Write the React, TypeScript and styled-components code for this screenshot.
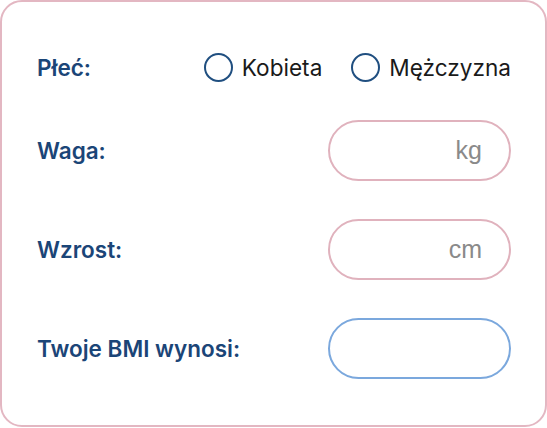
import React from "react";
import styled, { createGlobalStyle } from "styled-components";

const Global = createGlobalStyle`
  html, body { margin: 0; padding: 0; background: #ffffff; }
  body { font-family: Inter, "Noto Sans", sans-serif; }
  * { box-sizing: border-box; }
`;

const Card = styled.div`
  width: 547px;
  height: 427px;
  border: 2px solid #e3b7c2;
  border-radius: 22px;
  background: #fff;
  padding: 34px 34px 0 35px;
  display: flex;
  flex-direction: column;
`;

const GenderRow = styled.div`
  height: 62px;
  display: flex;
  align-items: center;
  justify-content: space-between;
  margin-bottom: 22px;
`;

const Fields = styled.div`
  display: flex;
  flex-direction: column;
  gap: 38px;
`;

const Row = styled.div`
  height: 61px;
  display: flex;
  align-items: center;
  justify-content: space-between;
`;

const Label = styled.span`
  font-size: 22.5px;
  font-weight: 600;
  color: #1b4577;
`;

const Options = styled.div`
  display: flex;
  align-items: center;
  gap: 29px;
`;

const Option = styled.label`
  display: flex;
  align-items: center;
  gap: 9px;
  font-size: 22.6px;
  color: #1a1a1a;
`;

const Circle = styled.span`
  width: 29px;
  height: 29px;
  border-radius: 50%;
  border: 2px solid #204f80;
`;

const Input = styled.div<{ $active?: boolean }>`
  width: 183px;
  height: 61px;
  border-radius: 31px;
  border: 2px solid ${(p) => (p.$active ? "#7ba8dd" : "#e0b2bd")};
  display: flex;
  align-items: center;
  justify-content: flex-end;
  padding-right: 27px;
  font-family: "Liberation Sans", Arial, sans-serif;
  font-size: 25px;
  color: #8a8a8a;
`;

export default function App() {
  return (
    <>
      <Global />
      <Card>
        <GenderRow>
          <Label>Płeć:</Label>
          <Options>
            <Option>
              <Circle />
              Kobieta
            </Option>
            <Option>
              <Circle />
              Mężczyzna
            </Option>
          </Options>
        </GenderRow>
        <Fields>
          <Row>
            <Label>Waga:</Label>
            <Input>kg</Input>
          </Row>
          <Row>
            <Label>Wzrost:</Label>
            <Input>cm</Input>
          </Row>
          <Row>
            <Label>Twoje BMI wynosi:</Label>
            <Input $active />
          </Row>
        </Fields>
      </Card>
    </>
  );
}
